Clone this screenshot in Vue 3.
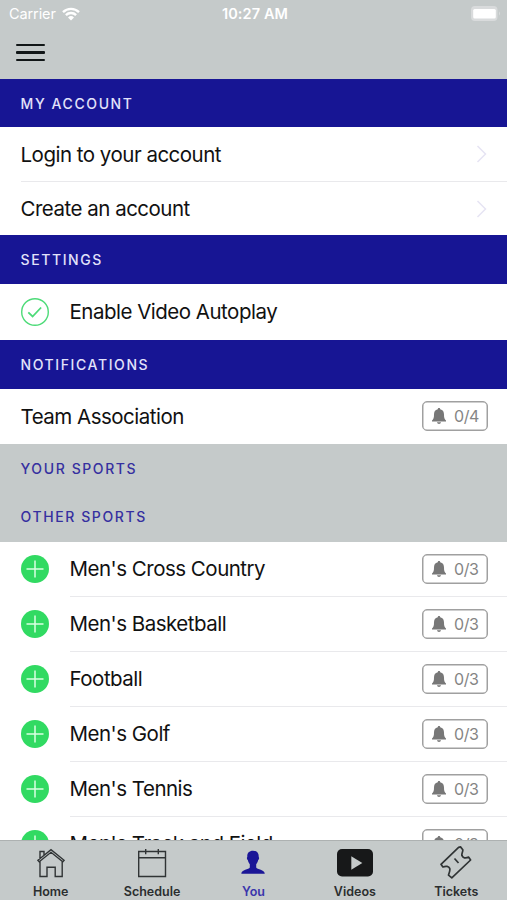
<template>
  <div class="screen">
    <header class="top">
      <div class="status">
        <div class="carrier">
          <span>Carrier</span>
          <svg class="wifi" width="18" height="14" viewBox="0 0 18 14">
            <path d="M1 5.1a11.5 11.5 0 0 1 16 0" />
            <path d="M3.9 8.1a7.3 7.3 0 0 1 10.2 0" />
            <path class="dot" d="M6 10.5a4.3 4.3 0 0 1 6 0L9 13.6z" />
          </svg>
        </div>
        <span class="time">10:27 AM</span>
        <svg class="battery" width="30" height="15" viewBox="0 0 30 15">
          <rect class="shell" x="0" y="0" width="26.5" height="15" rx="4" />
          <rect x="2.2" y="3" width="22.6" height="9.5" rx="1.5" />
          <path class="shell" d="M28 5.5q2 2 0 4z" />
        </svg>
      </div>
      <div class="menu"><i></i><i></i><i></i></div>
    </header>

    <main class="list">
      <h2 class="section first">MY ACCOUNT</h2>
      <div v-for="link in links" :key="link" class="row link">
        <span class="label">{{ link }}</span>
        <svg class="chevron" width="12" height="20" viewBox="0 0 12 20">
          <path d="M1.5 2l8 8-8 8" />
        </svg>
      </div>

      <h2 class="section">SETTINGS</h2>
      <div class="row setting">
        <svg class="check" width="28" height="28" viewBox="0 0 28 28">
          <circle cx="14" cy="14" r="13.3" />
          <path d="M7.3 14.3l4.3 4.2 8.5-9" />
        </svg>
        <span class="label">Enable Video Autoplay</span>
      </div>

      <h2 class="section">NOTIFICATIONS</h2>
      <div class="row team">
        <span class="label">Team Association</span>
        <div class="badge">
          <svg class="bell" width="14" height="16" viewBox="0 0 14 16">
            <path :d="bell" />
          </svg>
          <span>0/4</span>
        </div>
      </div>

      <h2 class="section grey">YOUR SPORTS</h2>
      <h2 class="section grey other">OTHER SPORTS</h2>
      <div v-for="sport in sports" :key="sport" class="row sport">
        <svg class="plus" width="28" height="28" viewBox="0 0 28 28">
          <circle cx="14" cy="14" r="14" />
          <path d="M14 5.5v17M5.5 14h17" />
        </svg>
        <div class="body">
          <span class="label">{{ sport }}</span>
          <div class="badge">
            <svg class="bell" width="14" height="16" viewBox="0 0 14 16">
              <path :d="bell" />
            </svg>
            <span>0/3</span>
          </div>
        </div>
      </div>
    </main>

    <nav class="tabs">
      <div class="tab">
        <svg width="34" height="34" viewBox="0 0 34 34">
          <path d="M5.2 15.8L17 6.300l11.800 9.500 1.300-1.500L17 3.600 3.900 14.300zM6 13V5.500h4v3.700M6 15.300v15.200h7V21.300h8.200v9.200h7V15.300" />
        </svg>
        <span>Home</span>
      </div>
      <div class="tab">
        <svg width="34" height="34" viewBox="0 0 34 34">
          <path d="M3.7 5.5h26.8v25H3.7zM3.7 11.7h26.8M10.7 3v5.2M23.3 3v5.2" />
        </svg>
        <span>Schedule</span>
      </div>
      <div class="tab active">
        <svg width="34" height="34" viewBox="0 0 34 34">
          <path class="solid" d="M17 4.700c4.200 0 6 2.700 5.700 6.200.8.700.3 2.600-.5 3.200-.4 1.900-1 3-2 4.100v3.300c1 2 8.300 2 8.600 6.300H5.300c.3-4.300 7.600-4.300 8.500-6.300v-3.300c-1-1.100-1.600-2.200-2-4.100-.8-.6-1.300-2.500-.5-3.200C11 7.400 12.800 4.700 17 4.700z" />
        </svg>
        <span>You</span>
      </div>
      <div class="tab">
        <svg width="38" height="34" viewBox="0 0 38 34">
          <rect class="solid" x="1" y="3" width="36" height="27.5" rx="5" />
          <path class="play" d="M15.3 10.2l11 6.800-11 6.800z" />
        </svg>
        <span>Videos</span>
      </div>
      <div class="tab">
        <svg width="34" height="34" viewBox="0 0 34 34">
          <path class="ticket" d="M19.6 1.400L2 18.300l1.900 2.700c3-1.300 6-.8 6.800 1.400.8 2.300-.8 4.600-1.200 6.800l3.300 2.600L31.600 14l-1.900-2.900c-3.100 1.600-6.100.9-6.800-1.500-.5-1.900 1.200-3.900.9-5.900L21.500.9z" />
          <path class="ticket" d="M15.500 12.500l4 4.500" />
        </svg>
        <span>Tickets</span>
      </div>
    </nav>
  </div>
</template>

<script setup>
const links = ["Login to your account", "Create an account"]

const sports = [
  "Men's Cross Country",
  "Men's Basketball",
  "Football",
  "Men's Golf",
  "Men's Tennis",
  "Men's Track and Field",
]

const bell =
  "M7 0c.8 0 1.200.5 1.200 1.200C11 1.800 12 3.800 12 6.500c0 3.500.5 4.600 2 6V13.500H0V12.500c1.500-1.400 2-2.500 2-6C2 3.800 3 1.800 5.800 1.200 5.800.5 6.200 0 7 0zM5 14.300h4C8.800 15.500 8 16 7 16s-1.800-.5-2-1.700z"
</script>

<style>
body {
  margin: 0;
}
</style>

<style scoped>
.screen {
  display: flex;
  flex-direction: column;
  width: 507px;
  height: 900px;
  overflow: hidden;
  background: #fff;
  color: #111;
  font-family: Inter, "Liberation Sans", sans-serif;
}

svg {
  display: block;
  flex: none;
}

.top {
  flex: none;
  height: 79px;
  background: #c5caca;
}

.status {
  display: grid;
  grid-template-columns: 1fr auto 1fr;
  align-items: center;
  height: 27px;
  padding: 0 6px 0 9px;
  color: #fff;
  font-size: 14.5px;
}

.carrier {
  display: flex;
  align-items: center;
  gap: 6px;
  letter-spacing: -0.1px;
}

.wifi path {
  fill: none;
  stroke: #fff;
  stroke-width: 2.4;
}

.wifi .dot {
  fill: #fff;
  stroke: none;
}

.time {
  font-weight: 600;
  font-size: 14.5px;
  letter-spacing: 0.1px;
}

.battery {
  justify-self: end;
  fill: #fff;
}

.battery .shell {
  fill: #d9dbdc;
}

.menu {
  display: flex;
  flex-direction: column;
  gap: 5px;
  width: 29px;
  padding: 17px 0 0 16px;
}

.menu i {
  height: 2.3px;
  border-radius: 1px;
  background: #111617;
}

.list {
  flex: 1;
  min-height: 0;
  overflow: hidden;
}

.section {
  display: flex;
  align-items: center;
  box-sizing: border-box;
  height: 49px;
  margin: 0;
  padding-left: 20.5px;
  background: #171594;
  color: #e2e2fa;
  font-size: 14px;
  font-weight: 500;
  letter-spacing: 1.6px;
}

.section.first {
  height: 48px;
}

.section.grey {
  background: #c5caca;
  color: #3630a0;
}

.section.other {
  padding-bottom: 1px;
}

.row {
  display: flex;
  align-items: center;
  box-sizing: border-box;
  height: 55px;
  padding-right: 19px;
}

.label {
  flex: 1;
  font-size: 20.5px;
  letter-spacing: -0.5px;
  white-space: nowrap;
}

.link {
  height: 54px;
  margin-left: 20.5px;
}

.link + .link {
  border-top: 1px solid #e9e9ec;
}

.chevron path {
  fill: none;
  stroke: #e6e4f3;
  stroke-width: 1.5;
}

.setting {
  gap: 21px;
  height: 55.5px;
  padding-left: 20.5px;
}

.check {
  fill: none;
  stroke: #4ddb78;
  stroke-width: 1.4;
}

.check path {
  stroke-width: 1.8;
}

.team {
  padding-left: 20.5px;
}

.badge {
  display: flex;
  align-items: center;
  gap: 8px;
  box-sizing: border-box;
  width: 66px;
  height: 30px;
  padding-left: 9px;
  border: 1.5px solid #a0a0a0;
  border-radius: 5px;
  box-shadow: inset 0 0 0 0.5px #a0a0a0;
  color: #858585;
  font-size: 16px;
  letter-spacing: -0.4px;
}

.bell {
  fill: #777;
}

.sport {
  gap: 21px;
  padding: 0 0 0 20.5px;
}

.sport .body {
  display: flex;
  flex: 1;
  align-items: center;
  box-sizing: border-box;
  height: 55px;
  padding-right: 19px;
  border-bottom: 1px solid #e9e9ec;
}

.plus {
  fill: #31da62;
}

.plus path {
  stroke: #d9ffe2;
  stroke-width: 1.5;
}

.tabs {
  display: grid;
  grid-template-columns: repeat(5, 1fr);
  flex: none;
  box-sizing: border-box;
  height: 60px;
  padding-top: 5px;
  border-top: 1px solid #adb1b1;
  background: #c5caca;
}

.tab {
  display: flex;
  flex-direction: column;
  align-items: center;
  gap: 3px;
  color: #2b2e2f;
  font-size: 12.5px;
  font-weight: 600;
  line-height: 17px;
}

.tab path {
  fill: none;
  stroke: #303435;
  stroke-width: 1.4;
}

.tab.active {
  color: #3a35ac;
}

.tab .solid {
  fill: #171819;
  stroke: none;
}

.tab.active .solid {
  fill: #1b1697;
}

.tab .play {
  fill: #c5caca;
  stroke: none;
}

.tab .ticket {
  stroke-width: 1.7;
  stroke-linejoin: round;
}
</style>
